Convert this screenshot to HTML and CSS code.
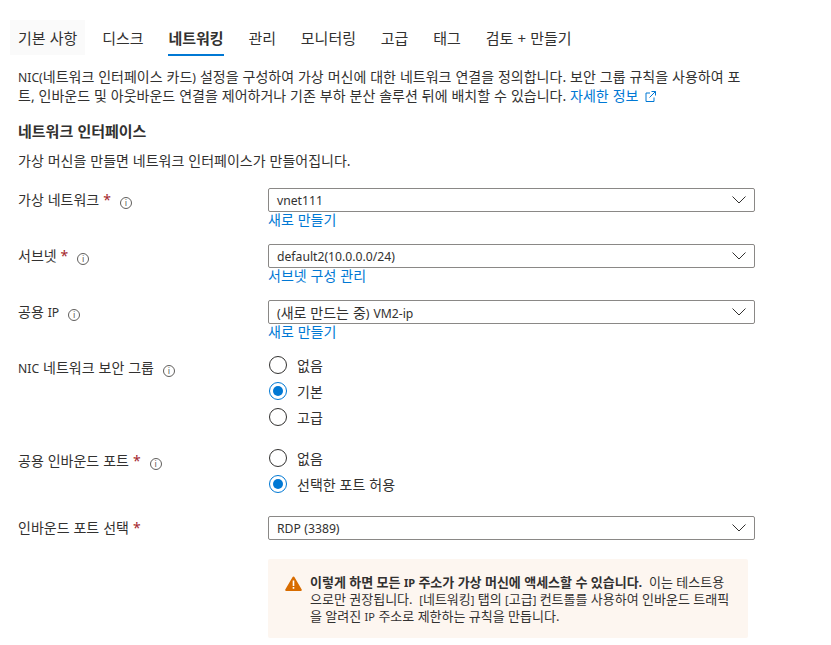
FILE: index.html
```html
<!DOCTYPE html>
<html lang="ko">
<head>
    <meta charset="UTF-8">
    <title>네트워킹</title>
    <link rel="stylesheet" href="styles.css">
</head>
<body>
    <nav class="tabs">
        <a class="tab hovered">기본 사항</a>
        <a class="tab">디스크</a>
        <a class="tab active">네트워킹</a>
        <a class="tab">관리</a>
        <a class="tab">모니터링</a>
        <a class="tab">고급</a>
        <a class="tab">태그</a>
        <a class="tab">검토 + 만들기</a>
    </nav>

    <p class="intro"><span class="lat">NIC(</span>네트워크 인터페이스 카드<span class="lat">)</span> 설정을 구성하여 가상 머신에 대한 네트워크 연결을 정의합니다. 보안 그룹 규칙을 사용하여 포트, 인바운드 및 아웃바운드 연결을 제어하거나 기존 부하 분산 솔루션 뒤에 배치할 수 있습니다. <a class="link">자세한 정보
        <svg class="ext" width="11" height="11" viewBox="0 0 11 11"><path d="M5 2H1v8.500h8V6.500M6.500.5h4v4M10.500.5L4.500 6.500" fill="none" stroke="#0078d4"/></svg></a></p>

    <h2 class="section-title">네트워크 인터페이스</h2>
    <p class="section-sub">가상 머신을 만들면 네트워크 인터페이스가 만들어집니다.</p>

    <div class="form">
        <div class="row row-select">
            <div class="label">가상 네트워크 <span class="req">*</span> <span class="info">i</span></div>
            <div class="control">
                <div class="select"><span class="lat">vnet111</span><svg class="chev" width="14" height="8" viewBox="0 0 14 8"><path d="M.5.500L7 7 13.500.500" fill="none" stroke="#323130"/></svg></div>
                <a class="link sub-link">새로 만들기</a>
            </div>
        </div>
        <div class="row row-select">
            <div class="label">서브넷 <span class="req">*</span> <span class="info">i</span></div>
            <div class="control">
                <div class="select"><span class="lat">default2(10.0.0.0/24)</span><svg class="chev" width="14" height="8" viewBox="0 0 14 8"><path d="M.5.500L7 7 13.500.500" fill="none" stroke="#323130"/></svg></div>
                <a class="link sub-link">서브넷 구성 관리</a>
            </div>
        </div>
        <div class="row row-select">
            <div class="label">공용 <span class="lat">IP</span> <span class="info">i</span></div>
            <div class="control">
                <div class="select"><span><span class="lat">(</span>새로 만드는 중<span class="lat">)</span> <span class="lat">VM2-ip</span></span><svg class="chev" width="14" height="8" viewBox="0 0 14 8"><path d="M.5.500L7 7 13.500.500" fill="none" stroke="#323130"/></svg></div>
                <a class="link sub-link">새로 만들기</a>
            </div>
        </div>
        <div class="row row-radio">
            <div class="label"><span class="lat">NIC</span> 네트워크 보안 그룹 <span class="info">i</span></div>
            <div class="radios">
                <div class="radio"><span class="dot"></span>없음</div>
                <div class="radio"><span class="dot on"></span>기본</div>
                <div class="radio"><span class="dot"></span>고급</div>
            </div>
        </div>
        <div class="row row-radio">
            <div class="label">공용 인바운드 포트 <span class="req">*</span> <span class="info">i</span></div>
            <div class="radios">
                <div class="radio"><span class="dot"></span>없음</div>
                <div class="radio"><span class="dot on"></span>선택한 포트 허용</div>
            </div>
        </div>
        <div class="row row-port">
            <div class="label">인바운드 포트 선택 <span class="req">*</span></div>
            <div class="control">
                <div class="select"><span class="lat">RDP (3389)</span><svg class="chev" width="14" height="8" viewBox="0 0 14 8"><path d="M.5.500L7 7 13.500.500" fill="none" stroke="#323130"/></svg></div>
            </div>
        </div>
        <div class="row">
            <div></div>
            <div class="warning">
                <svg class="warn-icon" width="17" height="15" viewBox="0 0 17 15"><path d="M8.500.5a1 1 0 0 1 .9.500l7.300 12.400a1 1 0 0 1-.9 1.500H1.200a1 1 0 0 1-.9-1.500L7.600 1a1 1 0 0 1 .9-.5z" fill="#d86c00"/><path d="M7.700 4.500h1.600v5.500H7.700zM7.700 11h1.600v1.700H7.700z" fill="#fff"/></svg>
                <p class="warn-text"><b>이렇게 하면 모든 <span class="lat-small">IP</span> 주소가 가상 머신에 액세스할 수 있습니다.</b> &nbsp;이는 테스트용<br>으로만 권장됩니다. &nbsp;<span class="lat-small">[</span>네트워킹<span class="lat-small">]</span> 탭의 <span class="lat-small">[</span>고급<span class="lat-small">]</span> 컨트롤를 사용하여 인바운드 트래픽<br>을 알려진 <span class="lat-small">IP</span> 주소로 제한하는 규칙을 만듭니다.</p>
            </div>
        </div>
    </div>
</body>
</html>
```

FILE: styles.css
```css
* {
    box-sizing: border-box;
}

body {
    margin: 0;
    padding: 0 18px;
    background: #ffffff;
    color: #323130;
    font-family: "Noto Sans", "Noto Sans CJK KR", sans-serif;
    font-size: 14px;
    word-spacing: 0.3px;
    overflow: hidden;
    height: 645px;
}

a {
    text-decoration: none;
}

.link {
    color: #0078d4;
}

/* latin runs are set smaller, the hangul face runs big */
.lat {
    font-size: 12.2px;
}

.lat-small {
    font-size: 11px;
}

/* Tabs */
.tabs {
    display: flex;
    gap: 24.8px;
    padding-top: 20px;
}

.tab {
    font-size: 15px;
    line-height: 24px;
    height: 36px;
    padding-top: 6px;
}

.tab.hovered {
    margin: 0 -8px;
    padding: 6px 8px 0;
    height: 35px;
    background: #fafafa;
}

.tab.active {
    font-weight: 700;
    border-bottom: 2px solid #0078d4;
}

/* Intro */
.intro {
    margin: 12px 0 0;
    width: 730px;
    line-height: 18px;
}

.ext {
    margin-left: 3px;
    vertical-align: -1px;
}

.section-title {
    margin: 16px 0 0;
    font-size: 15px;
    line-height: 20px;
    font-weight: 700;
}

.section-sub {
    margin: 11px 0 0;
    line-height: 18px;
}

/* Form */
.form {
    margin-top: 18px;
}

.row {
    display: grid;
    grid-template-columns: 250px 487px;
}

.row-select {
    height: 56px;
}

.row-radio {
    padding-bottom: 23px;
}

.row-port {
    height: 43px;
}

.label {
    line-height: 24px;
}

.req {
    color: #a4262c;
}

.info {
    display: inline-block;
    width: 12px;
    height: 12px;
    margin-left: 5px;
    border: 1px solid #605e5c;
    border-radius: 50%;
    color: #605e5c;
    font-size: 9px;
    line-height: 10px;
    text-align: center;
    vertical-align: -1px;
}

.select {
    display: flex;
    align-items: center;
    justify-content: space-between;
    height: 24px;
    padding: 0 8px;
    border: 1px solid #8a8886;
    border-radius: 2px;
}

.sub-link {
    display: block;
    line-height: 16px;
}

.radios {
    display: flex;
    flex-direction: column;
    gap: 8px;
}

.radio {
    display: flex;
    align-items: center;
    gap: 10px;
    margin-left: 1px;
    height: 18px;
}

.dot {
    width: 18px;
    height: 18px;
    border: 1px solid #323130;
    border-radius: 50%;
    flex: none;
    position: relative;
}

.dot.on {
    border-color: #0078d4;
}

.dot.on::after {
    content: "";
    position: absolute;
    left: 3px;
    top: 3px;
    width: 10px;
    height: 10px;
    border-radius: 50%;
    background: #0078d4;
}

/* Warning */
.warning {
    display: flex;
    gap: 8px;
    width: 480px;
    height: 79px;
    padding: 15px 17px 0;
    background: #fdf6f0;
    border-radius: 2px;
}

.warn-icon {
    flex: none;
    margin-top: 2px;
}

.warn-text {
    margin: 0;
    font-size: 13px;
    line-height: 16px;
    word-spacing: 0;
    white-space: nowrap;
}

.warn-text b {
    font-weight: 700;
}
```
